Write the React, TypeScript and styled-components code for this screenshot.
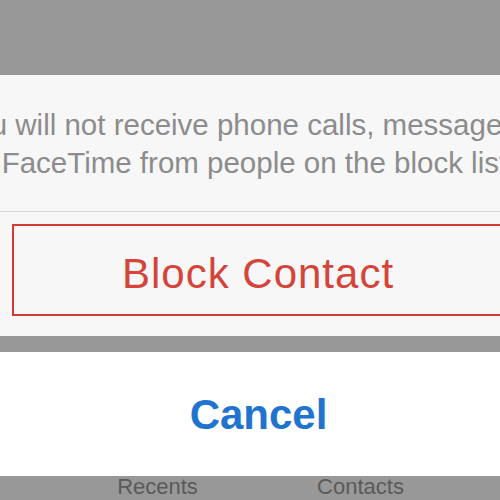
import React from 'react';
import styled, { createGlobalStyle } from 'styled-components';

const GlobalStyle = createGlobalStyle`
  html, body {
    margin: 0;
    padding: 0;
    width: 500px;
    height: 500px;
    overflow: hidden;
    background: #989898;
    font-family: "Liberation Sans", Arial, sans-serif;
  }
`;

// the screen is a bit wider than the window, so its right edge is cut off
const Screen = styled.div`
  width: 517px;
  height: 500px;
  display: flex;
  flex-direction: column;
  background: #989898;
`;

const Dim = styled.div<{ $height: number }>`
  height: ${(p) => p.$height}px;
  flex-shrink: 0;
  background: #989898;
`;

const Sheet = styled.div`
  background: #f7f7f7;
  display: flex;
  flex-direction: column;
`;

const Message = styled.div`
  padding: 31px 0 29px;
  display: flex;
  flex-direction: column;
  align-items: center;
  font-size: 29.5px;
  line-height: 38px;
  color: #8c8c8c;
`;

const Line = styled.span`
  white-space: nowrap;
`;

const Divider = styled.div`
  height: 1px;
  background: #d6d6d6;
`;

const ButtonArea = styled.div`
  padding: 12px 13px 20px 12px;
`;

const BlockButton = styled.button`
  width: 100%;
  height: 92px;
  box-sizing: border-box;
  border: 2px solid #d23a36;
  background: transparent;
  padding: 8px 0 0;
  font-family: inherit;
  font-size: 42px;
  letter-spacing: 1px;
  color: #d4443a;
  display: flex;
  align-items: center;
  justify-content: center;
`;

const CancelCard = styled.div`
  height: 124px;
  background: #ffffff;
  display: flex;
  align-items: center;
  justify-content: center;
  font-size: 42px;
  font-weight: bold;
  color: #1f74cf;
  padding-top: 2px;
  box-sizing: border-box;
`;

const TabBar = styled.div`
  display: flex;
  justify-content: center;
  padding-left: 1px;
`;

const TabLabel = styled.div`
  width: 203px;
  text-align: center;
  font-size: 22px;
  line-height: 22px;
  color: #5a5a5a;
`;

export default function App() {
  return (
    <>
      <GlobalStyle />
      <Screen>
        <Dim $height={75} />
        <Sheet>
          <Message>
            <Line>You will not receive phone calls, messages, or</Line>
            <Line>FaceTime from people on the block list.</Line>
          </Message>
          <Divider />
          <ButtonArea>
            <BlockButton>Block Contact</BlockButton>
          </ButtonArea>
        </Sheet>
        <Dim $height={16} />
        <CancelCard>Cancel</CancelCard>
        <TabBar>
          <TabLabel>Recents</TabLabel>
          <TabLabel>Contacts</TabLabel>
        </TabBar>
      </Screen>
    </>
  );
}
